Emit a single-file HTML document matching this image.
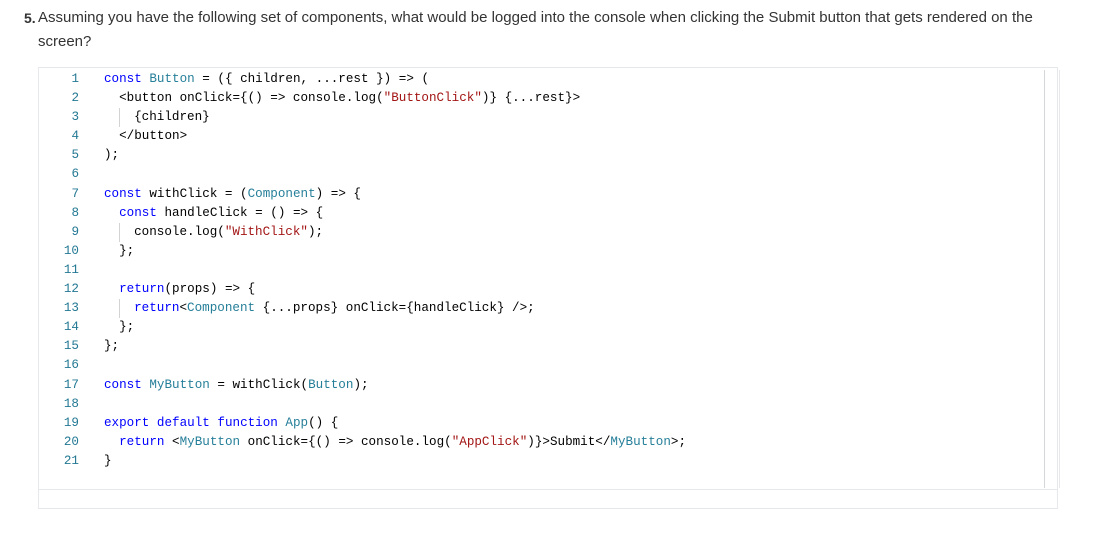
<!DOCTYPE html>
<html><head><meta charset="utf-8"><style>
body{margin:0;background:#fff;width:1114px;height:539px;overflow:hidden;font-family:"Liberation Sans",sans-serif;}
.q{position:absolute;left:24px;top:6px;width:1080px;font-size:15px;line-height:24px;color:#333;}
.q b{position:absolute;left:0;top:0;font-size:14px;}
.q span{display:block;padding-left:14px;}
.box{position:absolute;left:38px;top:67px;width:1020px;height:442px;border:1px solid #e6e8eb;box-sizing:border-box;}
.ed{position:absolute;left:0;top:0;width:1018px;height:421px;border-bottom:1px solid #e6e8eb;}
.sb{position:absolute;left:1005px;top:2px;width:14px;height:418px;border-left:1px solid #d5d7da;border-right:1px solid #e6e8eb;}
.code{position:absolute;left:0;top:2px;font-family:"Liberation Mono","DejaVu Sans Mono",monospace;font-size:12.6px;line-height:19.1px;white-space:pre;color:#000;}
.ln{display:inline-block;width:40px;text-align:right;color:#237893;margin-right:25px;}
.k{color:#0000ff;}.t{color:#267f99;}.s{color:#a31515;}
.g{display:inline-block;width:15px;height:19px;vertical-align:top;border-left:1px solid #d3d3d3;box-sizing:border-box;}
</style></head><body>
<div class="q"><b>5.</b><span>Assuming you have the following set of components, what would be logged into the console when clicking the Submit button that gets rendered on the<br>screen?</span></div>
<div class="box"><div class="ed"><div class="sb"></div>
<div class="code"><div><span class="ln">1</span><span class="k">const</span> <span class="t">Button</span> = ({ children, ...rest }) =&gt; (</div><div><span class="ln">2</span>  &lt;button onClick={() =&gt; console.log(<span class="s">"ButtonClick"</span>)} {...rest}&gt;</div><div><span class="ln">3</span>  <span class="g"></span>{children}</div><div><span class="ln">4</span>  &lt;/button&gt;</div><div><span class="ln">5</span>);</div><div><span class="ln">6</span></div><div><span class="ln">7</span><span class="k">const</span> withClick = (<span class="t">Component</span>) =&gt; {</div><div><span class="ln">8</span>  <span class="k">const</span> handleClick = () =&gt; {</div><div><span class="ln">9</span>  <span class="g"></span>console.log(<span class="s">"WithClick"</span>);</div><div><span class="ln">10</span>  };</div><div><span class="ln">11</span></div><div><span class="ln">12</span>  <span class="k">return</span>(props) =&gt; {</div><div><span class="ln">13</span>  <span class="g"></span><span class="k">return</span>&lt;<span class="t">Component</span> {...props} onClick={handleClick} /&gt;;</div><div><span class="ln">14</span>  };</div><div><span class="ln">15</span>};</div><div><span class="ln">16</span></div><div><span class="ln">17</span><span class="k">const</span> <span class="t">MyButton</span> = withClick(<span class="t">Button</span>);</div><div><span class="ln">18</span></div><div><span class="ln">19</span><span class="k">export</span> <span class="k">default</span> <span class="k">function</span> <span class="t">App</span>() {</div><div><span class="ln">20</span>  <span class="k">return</span> &lt;<span class="t">MyButton</span> onClick={() =&gt; console.log(<span class="s">"AppClick"</span>)}&gt;Submit&lt;/<span class="t">MyButton</span>&gt;;</div><div><span class="ln">21</span>}</div></div>
</div></div>
</body></html>
